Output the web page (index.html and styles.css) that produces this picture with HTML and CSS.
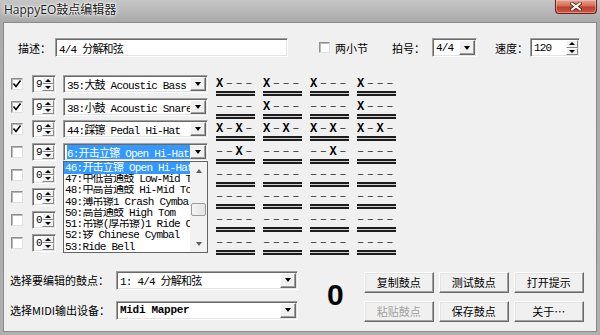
FILE: index.html
```html
<!DOCTYPE html>
<html>
<head>
<meta charset="utf-8">
<title>HappyEO鼓点编辑器</title>
<link rel="stylesheet" href="styles.css">
</head>
<body>
<div class="win">
  <div class="titlebar">
    <span class="title">HappyEO鼓点编辑器</span>
    <div class="close">
      <svg width="12" height="9" viewBox="0 0 12 9"><path d="M2 1.5 L10 7.5 M10 1.5 L2 7.5" stroke="#5a1a12" stroke-width="3.6" stroke-linecap="square"/><path d="M2 1.5 L10 7.5 M10 1.5 L2 7.5" stroke="#fff" stroke-width="2" stroke-linecap="square"/></svg>
    </div>
  </div>
  <div class="client">
    <div class="toprow">
      <span class="desc-lbl">描述：</span>
      <div class="sunk desc"><span class="val mono">4/4 分解和弦</span></div>
      <span class="chk two-chk"></span>
      <span class="two-lbl">两小节</span>
      <span class="beat-lbl">拍号：</span>
      <div class="sunk beat"><span class="val mono">4/4</span><span class="dd"></span></div>
      <span class="speed-lbl">速度：</span>
      <div class="sunk speed"><span class="val mono">120</span><span class="sb"><i class="up"></i><i class="dn"></i></span></div>
    </div>

    <div class="tracks">
      <div class="track">
        <span class="chk on"><svg width="10" height="10" viewBox="0 0 10 10"><path d="M1.5 4.5 L4 7.5 L8.5 1.5" fill="none" stroke="#000" stroke-width="1.6"/></svg></span>
        <div class="sunk num"><span class="val mono">9</span><span class="sb"><i class="up"></i><i class="dn"></i></span></div>
        <div class="sunk inst"><span class="val mono">35:大鼓 Acoustic Bass</span><span class="dd"></span></div>
        <div class="pats">
          <div class="pat"><div class="pt"><b>X</b>–––</div><div class="ln"></div></div>
          <div class="pat"><div class="pt"><b>X</b>–––</div><div class="ln"></div></div>
          <div class="pat"><div class="pt"><b>X</b>–––</div><div class="ln"></div></div>
          <div class="pat"><div class="pt"><b>X</b>–––</div><div class="ln"></div></div>
        </div>
      </div>
      <div class="track">
        <span class="chk on"><svg width="10" height="10" viewBox="0 0 10 10"><path d="M1.5 4.5 L4 7.5 L8.5 1.5" fill="none" stroke="#000" stroke-width="1.6"/></svg></span>
        <div class="sunk num"><span class="val mono">9</span><span class="sb"><i class="up"></i><i class="dn"></i></span></div>
        <div class="sunk inst"><span class="val mono">38:小鼓 Acoustic Snare</span><span class="dd"></span></div>
        <div class="pats">
          <div class="pat"><div class="pt">––––</div><div class="ln"></div></div>
          <div class="pat"><div class="pt"><b>X</b>–––</div><div class="ln"></div></div>
          <div class="pat"><div class="pt">––––</div><div class="ln"></div></div>
          <div class="pat"><div class="pt"><b>X</b>–––</div><div class="ln"></div></div>
        </div>
      </div>
      <div class="track">
        <span class="chk on"><svg width="10" height="10" viewBox="0 0 10 10"><path d="M1.5 4.5 L4 7.5 L8.5 1.5" fill="none" stroke="#000" stroke-width="1.6"/></svg></span>
        <div class="sunk num"><span class="val mono">9</span><span class="sb"><i class="up"></i><i class="dn"></i></span></div>
        <div class="sunk inst"><span class="val mono">44:踩镲 Pedal Hi-Hat</span><span class="dd"></span></div>
        <div class="pats">
          <div class="pat"><div class="pt"><b>X</b>–<b>X</b>–</div><div class="ln"></div></div>
          <div class="pat"><div class="pt"><b>X</b>–<b>X</b>–</div><div class="ln"></div></div>
          <div class="pat"><div class="pt"><b>X</b>–<b>X</b>–</div><div class="ln"></div></div>
          <div class="pat"><div class="pt"><b>X</b>–<b>X</b>–</div><div class="ln"></div></div>
        </div>
      </div>
      <div class="track">
        <span class="chk"></span>
        <div class="sunk num"><span class="val mono">9</span><span class="sb"><i class="up"></i><i class="dn"></i></span></div>
        <div class="sunk inst"><span class="val mono"><span class="hl">6:开击立镲 Open Hi-Hat</span></span><span class="dd"></span></div>
        <div class="pats">
          <div class="pat"><div class="pt">––<b>X</b>–</div><div class="ln"></div></div>
          <div class="pat"><div class="pt">––––</div><div class="ln"></div></div>
          <div class="pat"><div class="pt">––<b>X</b>–</div><div class="ln"></div></div>
          <div class="pat"><div class="pt">––––</div><div class="ln"></div></div>
        </div>
      </div>
      <div class="track">
        <span class="chk"></span>
        <div class="sunk num"><span class="val mono">0</span><span class="sb"><i class="up"></i><i class="dn"></i></span></div>
        <div class="sunk inst"><span class="val mono"></span><span class="dd"></span></div>
        <div class="pats">
          <div class="pat"><div class="pt">––––</div><div class="ln"></div></div>
          <div class="pat"><div class="pt">––––</div><div class="ln"></div></div>
          <div class="pat"><div class="pt">––––</div><div class="ln"></div></div>
          <div class="pat"><div class="pt">––––</div><div class="ln"></div></div>
        </div>
      </div>
      <div class="track">
        <span class="chk"></span>
        <div class="sunk num"><span class="val mono">0</span><span class="sb"><i class="up"></i><i class="dn"></i></span></div>
        <div class="sunk inst"><span class="val mono"></span><span class="dd"></span></div>
        <div class="pats">
          <div class="pat"><div class="pt">––––</div><div class="ln"></div></div>
          <div class="pat"><div class="pt">––––</div><div class="ln"></div></div>
          <div class="pat"><div class="pt">––––</div><div class="ln"></div></div>
          <div class="pat"><div class="pt">––––</div><div class="ln"></div></div>
        </div>
      </div>
      <div class="track">
        <span class="chk"></span>
        <div class="sunk num"><span class="val mono">0</span><span class="sb"><i class="up"></i><i class="dn"></i></span></div>
        <div class="sunk inst"><span class="val mono"></span><span class="dd"></span></div>
        <div class="pats">
          <div class="pat"><div class="pt">––––</div><div class="ln"></div></div>
          <div class="pat"><div class="pt">––––</div><div class="ln"></div></div>
          <div class="pat"><div class="pt">––––</div><div class="ln"></div></div>
          <div class="pat"><div class="pt">––––</div><div class="ln"></div></div>
        </div>
      </div>
      <div class="track">
        <span class="chk"></span>
        <div class="sunk num"><span class="val mono">0</span><span class="sb"><i class="up"></i><i class="dn"></i></span></div>
        <div class="sunk inst"><span class="val mono"></span><span class="dd"></span></div>
        <div class="pats">
          <div class="pat"><div class="pt">––––</div><div class="ln"></div></div>
          <div class="pat"><div class="pt">––––</div><div class="ln"></div></div>
          <div class="pat"><div class="pt">––––</div><div class="ln"></div></div>
          <div class="pat"><div class="pt">––––</div><div class="ln"></div></div>
        </div>
      </div>

      <div class="droplist">
        <div class="items mono">
          <div class="item sel">46:开击立镲 Open Hi-Hat</div>
          <div class="item">47:中低音通鼓 Low-Mid Tom</div>
          <div class="item">48:中高音通鼓 Hi-Mid Tom</div>
          <div class="item">49:薄吊镲1 Crash Cymbal 1</div>
          <div class="item">50:高音通鼓 High Tom</div>
          <div class="item">51:吊镲(厚吊镲)1 Ride Cymbal 1</div>
          <div class="item">52:锣 Chinese Cymbal</div>
          <div class="item">53:Ride Bell</div>
        </div>
        <div class="vscroll">
          <span class="sarrow up"></span>
          <span class="strack"><span class="thumb"></span></span>
          <span class="sarrow dn"></span>
        </div>
      </div>
    </div>

    <div class="bottom">
      <div class="bl">
        <div class="brow">
          <span class="blbl">选择要编辑的鼓点：</span>
          <div class="sunk bcombo"><span class="val mono">1: 4/4 分解和弦</span><span class="dd"></span></div>
        </div>
        <div class="brow">
          <span class="blbl">选择MIDI输出设备：</span>
          <div class="sunk bcombo"><span class="val mono midi">Midi Mapper</span><span class="dd"></span></div>
        </div>
      </div>
      <div class="zero">0</div>
      <div class="btns">
        <span class="btn">复制鼓点</span>
        <span class="btn">测试鼓点</span>
        <span class="btn">打开提示</span>
        <span class="btn disabled">粘贴鼓点</span>
        <span class="btn">保存鼓点</span>
        <span class="btn">关于…</span>
      </div>
    </div>
  </div>
</div>
</body>
</html>
```
FILE: styles.css
```css
* { box-sizing: border-box; }
html, body { margin: 0; padding: 0; }
body {
  width: 600px;
  height: 335px;
  overflow: hidden;
  background: #b2b2b2;
  font-family: "Noto Sans CJK SC", "Liberation Sans", sans-serif;
  font-size: 11px;
  color: #000;
}
.win {
  width: 600px;
  height: 335px;
  background: linear-gradient(#c6c6c6, #a9a9a9 22px, #b0b0b0);
  display: flex;
  flex-direction: column;
}
.titlebar {
  height: 22px;
  display: flex;
  align-items: flex-start;
  justify-content: space-between;
}
.title {
  margin: 1px 0 0 4px;
  font-family: "Open Sans", "Noto Sans CJK SC", sans-serif;
  font-size: 12px;
  line-height: 17px;
  color: #1a1a1a;
  text-shadow: 0 0 5px #fff, 0 0 3px #fff, 0 0 2px #fff;
}
.close {
  width: 42px;
  height: 14px;
  margin-right: 3px;
  border: 1px solid #6b2019;
  border-top: none;
  border-radius: 0 0 4px 4px;
  background: linear-gradient(#e6a595, #d36d5b 45%, #bf3f2c 55%, #cb5a45);
  box-shadow: inset 0 0 0 1px rgba(255, 210, 200, 0.45);
  display: flex;
  align-items: center;
  justify-content: center;
}
.client {
  margin: 0 3px;
  height: 310px;
  background: #f0f0f0;
  border: 1px solid #8a8a8a;
  padding-top: 15px;
}

/* generic controls */
.mono {
  font-family: "Liberation Mono", "Noto Sans CJK SC", monospace;
  font-size: 11px;
  letter-spacing: -0.8px;
}
.sunk {
  background: #fff;
  border: 1px solid;
  border-color: #a0a0a0 #fff #fff #a0a0a0;
  box-shadow: inset 1px 1px #696969, inset -1px -1px #e3e3e3;
  padding: 1px;
  display: flex;
  align-items: stretch;
}
.val {
  flex: 1;
  min-width: 0;
  padding-left: 2px;
  display: flex;
  align-items: center;
  white-space: nowrap;
  overflow: hidden;
}
.dd {
  width: 16px;
  flex: none;
  background: #f0f0f0;
  border: 1px solid;
  border-color: #fff #696969 #696969 #fff;
  box-shadow: inset -1px -1px #a0a0a0;
  display: flex;
  align-items: center;
  justify-content: center;
}
.dd::after {
  content: "";
  border-left: 3.5px solid transparent;
  border-right: 3.5px solid transparent;
  border-top: 4px solid #000;
}
.sb {
  width: 12px;
  flex: none;
  display: flex;
  flex-direction: column;
}
.sb i {
  flex: 1;
  background: #f0f0f0;
  border: 1px solid;
  border-color: #fff #8a8a8a #8a8a8a #fff;
  display: flex;
  align-items: center;
  justify-content: center;
}
.sb i::after {
  content: "";
  border-left: 3px solid transparent;
  border-right: 3px solid transparent;
}
.sb .up::after { border-bottom: 3px solid #000; }
.sb .dn::after { border-top: 3px solid #000; }
.chk {
  width: 12px;
  height: 12px;
  flex: none;
  background: #fff;
  border: 1px solid;
  border-color: #8f8f8f #e0e0e0 #e0e0e0 #8f8f8f;
  box-shadow: inset 1px 1px #b8b8b8;
  display: flex;
  align-items: center;
  justify-content: center;
}

/* top row */
.toprow {
  display: flex;
  align-items: center;
  height: 19px;
}
.toprow .sunk { height: 19px; }
.desc-lbl { margin-left: 14px; width: 37px; }
.desc { width: 233px; }
.two-chk { margin-left: 31px; width: 11px; height: 11px; }
.two-lbl { margin-left: 5px; width: 57px; }
.beat-lbl { width: 40px; }
.beat { width: 45px; }
.speed-lbl { margin-left: 18px; width: 35px; }
.speed { width: 50px; }

/* tracks */
.tracks {
  margin-top: 18px;
  position: relative;
}
.track {
  height: 22.7px;
  display: flex;
  align-items: flex-start;
}
.track .chk { margin: 3px 0 0 7px; }
.num { margin-left: 9px; width: 24px; height: 18px; }
.inst { margin-left: 7px; width: 145px; height: 18px; }
.hl { background: #3399ff; color: #fff; padding-right: 1px; }
.pats {
  margin-left: 8px;
  display: flex;
  gap: 8px;
}
.pat { width: 39px; padding-top: 2px; }
.pt {
  font-family: "Liberation Mono", monospace;
  font-size: 12px;
  letter-spacing: 2.55px;
  line-height: 14px;
  height: 14px;
  color: #404040;
  white-space: nowrap;
  overflow: hidden;
}
.pt b { color: #000; }
.ln {
  height: 5px;
  border-top: 2px solid #1e1e1e;
  border-bottom: 2px solid #1e1e1e;
  background: #d0d0d0;
}

/* dropdown list */
.droplist {
  position: absolute;
  left: 59px;
  top: 86px;
  width: 145px;
  height: 92px;
  background: #fff;
  border: 1px solid #646464;
  display: flex;
}
.items { flex: 1; min-width: 0; overflow: hidden; }
.item {
  height: 11.25px;
  line-height: 11.25px;
  padding-left: 1px;
  white-space: nowrap;
  overflow: hidden;
}
.item.sel { background: #3399ff; color: #fff; height: 12px; line-height: 12px; }
.vscroll {
  width: 17px;
  flex: none;
  background: #f2f2f2;
  display: flex;
  flex-direction: column;
}
.sarrow {
  height: 17px;
  display: flex;
  align-items: center;
  justify-content: center;
}
.sarrow::after {
  content: "";
  border-left: 3.5px solid transparent;
  border-right: 3.5px solid transparent;
}
.sarrow.up::after { border-bottom: 4px solid #606060; }
.sarrow.dn::after { border-top: 4px solid #606060; }
.strack { flex: 1; padding-top: 24px; display: flex; justify-content: center; }
.thumb {
  width: 15px;
  height: 13px;
  border: 1px solid #9a9a9a;
  border-radius: 2px;
  background: linear-gradient(90deg, #f4f4f4, #e4e4e4);
}

/* bottom */
.bottom {
  margin-top: 14.4px;
  display: flex;
  align-items: flex-start;
}
.bl { display: flex; flex-direction: column; gap: 11px; }
.brow { display: flex; align-items: center; }
.blbl { margin-left: 6px; width: 106px; white-space: nowrap; }
.bcombo { width: 182px; height: 19px; }
.midi { font-weight: bold; letter-spacing: -0.3px; }
.zero {
  margin: 9px 0 0 29px;
  font: bold 30px/30px "Liberation Sans", Arial, sans-serif;
}
.btns {
  margin: 1px 0 0 20px;
  display: grid;
  grid-template-columns: 70px 70px 70px;
  column-gap: 5px;
  row-gap: 8px;
}
.btn {
  height: 21px;
  background: #f0f0f0;
  border: 1px solid;
  border-color: #fff #696969 #696969 #fff;
  box-shadow: inset -1px -1px #a0a0a0, inset 1px 1px #e3e3e3;
  display: flex;
  align-items: center;
  justify-content: center;
}
.btn.disabled { color: #a0a0a0; }
```
